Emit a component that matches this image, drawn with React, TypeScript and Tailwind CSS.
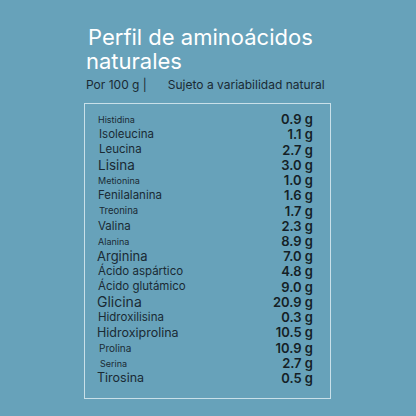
import React from 'react';

type Row = { name: string; value: string; size: string; indent: string };

// each label in the picture has its own size and a slight offset
const rows: Row[] = [
  { name: 'Histidina', value: '0.9 g', size: 'text-[9px]', indent: 'ml-[1px]' },
  { name: 'Isoleucina', value: '1.1 g', size: 'text-[11.5px]', indent: 'ml-[2px]' },
  { name: 'Leucina', value: '2.7 g', size: 'text-[11.5px]', indent: 'ml-[2px]' },
  { name: 'Lisina', value: '3.0 g', size: 'text-[13.5px]', indent: 'ml-[1px]' },
  { name: 'Metionina', value: '1.0 g', size: 'text-[9px]', indent: 'ml-[1px]' },
  { name: 'Fenilalanina', value: '1.6 g', size: 'text-[11.5px]', indent: 'ml-[1px]' },
  { name: 'Treonina', value: '1.7 g', size: 'text-[9.5px]', indent: 'ml-[2px]' },
  { name: 'Valina', value: '2.3 g', size: 'text-[11.5px]', indent: 'ml-[1px]' },
  { name: 'Alanina', value: '8.9 g', size: 'text-[9px]', indent: 'ml-[1px]' },
  { name: 'Arginina', value: '7.0 g', size: 'text-[13px]', indent: 'ml-0' },
  { name: 'Ácido aspártico', value: '4.8 g', size: 'text-[11.5px]', indent: 'ml-[1px]' },
  { name: 'Ácido glutámico', value: '9.0 g', size: 'text-[11.5px]', indent: 'ml-[1px]' },
  { name: 'Glicina', value: '20.9 g', size: 'text-[14px]', indent: 'ml-0' },
  { name: 'Hidroxilisina', value: '0.3 g', size: 'text-[11.5px]', indent: 'ml-[1px]' },
  { name: 'Hidroxiprolina', value: '10.5 g', size: 'text-[12.5px]', indent: 'ml-0' },
  { name: 'Prolina', value: '10.9 g', size: 'text-[10px]', indent: 'ml-[2px]' },
  { name: 'Serina', value: '2.7 g', size: 'text-[9px]', indent: 'ml-[3px]' },
  { name: 'Tirosina', value: '0.5 g', size: 'text-[12.5px]', indent: 'ml-0' },
];

export default function App() {
  return (
    <div className="w-[416px] h-[416px] bg-[#67a2ba] font-['Inter','Liberation_Sans',sans-serif] text-[#1a2a34]">
      <div className="pt-[25px] pl-[86px]">
        <h1 className="text-[22px] leading-[24px] text-white">
          <span className="pl-[2px]">Perfil de aminoácidos</span>
          <br />
          naturales
        </h1>
        <div className="mt-[4px] flex text-[12px] leading-[16px]">
          <span>Por 100 g |</span>
          <span className="ml-[21px]">Sujeto a variabilidad natural</span>
        </div>
      </div>

      <div className="mt-[10px] ml-[84px] w-[247px] border border-[#c9e0e9] pt-[8px] pb-[12px] pl-[12px] pr-[17px]">
        {rows.map((r) => (
          <div key={r.name} className="flex h-[15.24px] items-center justify-between">
            <span className={`${r.size} ${r.indent} leading-none`}>{r.name}</span>
            <span className="text-[13px] font-semibold leading-none text-[#151f26]">{r.value}</span>
          </div>
        ))}
      </div>
    </div>
  );
}
